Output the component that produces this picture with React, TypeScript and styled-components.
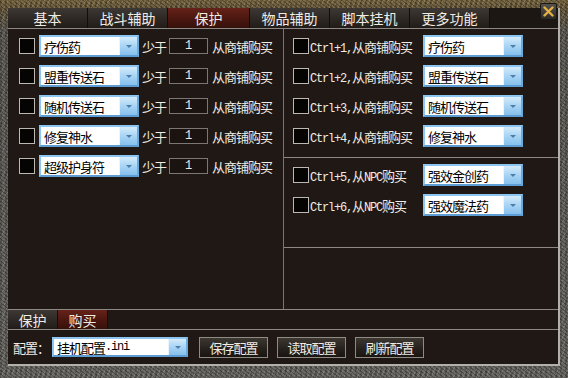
import { createGlobalStyle, styled } from "styled-components";

const cjk = `"Noto Sans CJK SC", "Noto Sans", sans-serif`;
const mono = `"Liberation Mono", "Noto Sans CJK SC", monospace`;

const GlobalStyle = createGlobalStyle`
  body {
    margin: 0;
    background: #111;
  }
  * {
    box-sizing: border-box;
  }
`;

const Frame = styled.div`
  position: relative;
  width: 568px;
  height: 378px;
  padding: 8px 8px 12px 8px;
  font-family: ${cjk};
  color: #f0ece4;
  background:
    repeating-linear-gradient(37deg, rgba(0, 0, 0, 0.28) 0 1px, transparent 1px 3px),
    repeating-linear-gradient(-61deg, rgba(255, 255, 255, 0.13) 0 1px, transparent 1px 4px),
    repeating-linear-gradient(90deg, rgba(0, 0, 0, 0.18) 0 2px, transparent 2px 5px),
    linear-gradient(180deg, #7d6b43 0, #6b5c3c 8px, #5f5c56 30px, #6a6863 100%);
`;

const Window = styled.div`
  display: flex;
  flex-direction: column;
  height: 100%;
  background: #1f1814;
  border-right: 2px solid #b3afa9;
  border-bottom: 2px solid #b3afa9;
`;

const TabBar = styled.div`
  display: flex;
  height: 20px;
  background: #1d1713;
`;

const Tab = styled.div<{ $active?: boolean; $w: number }>`
  display: flex;
  align-items: center;
  justify-content: center;
  width: ${(p) => p.$w}px;
  height: 100%;
  font-size: 14px;
  line-height: 1;
  border-right: 1px solid #120d0a;
  background: ${(p) =>
    p.$active
      ? "linear-gradient(180deg, #66221a 0%, #4a170f 55%, #35110b 100%)"
      : "linear-gradient(180deg, #3d3834 0%, #2d2824 55%, #221c18 100%)"};
`;

const CloseButton = styled.div`
  position: absolute;
  left: 540px;
  top: 3px;
  width: 17px;
  height: 17px;
  display: flex;
  align-items: center;
  justify-content: center;
  border-radius: 2px;
  background: linear-gradient(180deg, #55524d, #2c2a27);
  border: 1px solid #1a1816;
`;

const Main = styled.div`
  display: grid;
  grid-template-columns: 276px 1fr;
  height: 282px;
  border-top: 1px solid #8d8883;
  border-bottom: 1px solid #8d8883;
`;

const LeftPanel = styled.div`
  display: flex;
  flex-direction: column;
  gap: 8px;
  padding: 6px 0 0 11px;
  border-right: 1px solid #7a7570;
`;

const RightPanel = styled.div`
  display: flex;
  flex-direction: column;
`;

const Section = styled.div<{ $h: number }>`
  display: flex;
  flex-direction: column;
  gap: 8px;
  height: ${(p) => p.$h}px;
  padding: 6px 0 0 9px;
  border-bottom: 1px solid #8d8883;
`;

const Row = styled.div`
  display: flex;
  align-items: center;
  height: 22px;
`;

const Check = styled.div<{ $mr?: number }>`
  width: 16px;
  height: 16px;
  flex: none;
  margin-right: ${(p) => p.$mr ?? 0}px;
  background: #060403;
  border: 1px solid #bdb8b1;
`;

const Select = styled.div<{ $w: number; $h: number }>`
  display: flex;
  width: ${(p) => p.$w}px;
  height: ${(p) => p.$h}px;
  flex: none;
  background: #fff;
  border: 2px solid #8cc6f0;
  border-bottom-color: #5d9dd3;
  border-right-color: #6aaadd;
`;

const SelectText = styled.div`
  flex: 1;
  display: flex;
  align-items: center;
  padding-left: 3px;
  color: #000;
  font-size: 13px;
  letter-spacing: -1px;
  white-space: nowrap;
  overflow: hidden;
`;

const Ascii = styled.span`
  font-family: ${mono};
  font-size: 12px;
  letter-spacing: -1.2px;
`;

const Arrow = styled.div`
  width: 18px;
  display: flex;
  align-items: center;
  justify-content: center;
  border-left: 1px solid #eaf5fd;
  background: linear-gradient(180deg, #d4ebfb 0%, #a8d4f4 50%, #86c0ec 100%);
  &::after {
    content: "";
    border-left: 3px solid transparent;
    border-right: 3px solid transparent;
    border-top: 3px solid #4c7ea8;
  }
`;

const Label = styled.span<{ $ml?: number; $w?: number }>`
  margin-left: ${(p) => p.$ml ?? 0}px;
  width: ${(p) => (p.$w ? `${p.$w}px` : "auto")};
  flex: none;
  font-size: 13px;
  letter-spacing: -1px;
  white-space: nowrap;
`;

const Count = styled.div`
  width: 39px;
  height: 16px;
  margin-left: 3px;
  display: flex;
  align-items: center;
  justify-content: center;
  background: #1a1310;
  border: 1px solid #7c7772;
  font-family: ${mono};
  font-size: 12px;
`;

const BottomTabs = styled.div`
  display: flex;
  height: 20px;
  border-bottom: 1px solid #8d8883;
`;

const ConfigRow = styled.div`
  flex: 1;
  display: flex;
  align-items: center;
  padding-left: 5px;
`;

const Button = styled.div<{ $ml: number }>`
  width: 69px;
  height: 21px;
  margin-left: ${(p) => p.$ml}px;
  display: flex;
  align-items: center;
  justify-content: center;
  font-size: 13px;
  letter-spacing: -1px;
  border: 1px solid #8f8a84;
  background: linear-gradient(180deg, #3d3732 0%, #26201c 60%, #1a1511 100%);
`;

const topTabs = ["基本", "战斗辅助", "保护", "物品辅助", "脚本挂机", "更多功能"];
const leftItems = ["疗伤药", "盟重传送石", "随机传送石", "修复神水", "超级护身符"];
const shopItems = ["疗伤药", "盟重传送石", "随机传送石", "修复神水"];
const npcItems = ["强效金创药", "强效魔法药"];

function Dropdown({ text, w = 100, h = 22 }: { text: React.ReactNode; w?: number; h?: number }) {
  return (
    <Select $w={w} $h={h}>
      <SelectText>{text}</SelectText>
      <Arrow />
    </Select>
  );
}

export default function App() {
  return (
    <>
      <GlobalStyle />
      <Frame>
        <Window>
          <TabBar>
            {topTabs.map((t, i) => (
              <Tab key={t} $w={i === 2 ? 82 : 80} $active={i === 2}>
                {t}
              </Tab>
            ))}
          </TabBar>
          <Main>
            <LeftPanel>
              {leftItems.map((item) => (
                <Row key={item}>
                  <Check $mr={4} />
                  <Dropdown text={item} />
                  <Label $ml={3}>少于</Label>
                  <Count>1</Count>
                  <Label $ml={4}>从商铺购买</Label>
                </Row>
              ))}
            </LeftPanel>
            <RightPanel>
              <Section $h={129}>
                {shopItems.map((item, i) => (
                  <Row key={item}>
                    <Check />
                    <Label $ml={1} $w={113}>
                      <Ascii>Ctrl+{i + 1},</Ascii>从商铺购买
                    </Label>
                    <Dropdown text={item} />
                  </Row>
                ))}
              </Section>
              <Section $h={90}>
                {npcItems.map((item, i) => (
                  <Row key={item}>
                    <Check />
                    <Label $ml={1} $w={113}>
                      <Ascii>Ctrl+{i + 5},</Ascii>从<Ascii>NPC</Ascii>购买
                    </Label>
                    <Dropdown text={item} />
                  </Row>
                ))}
              </Section>
            </RightPanel>
          </Main>
          <BottomTabs>
            <Tab $w={50}>保护</Tab>
            <Tab $w={50} $active>
              购买
            </Tab>
          </BottomTabs>
          <ConfigRow>
            <Label $w={39}>配置：</Label>
            <Dropdown
              w={136}
              h={20}
              text={
                <>
                  挂机配置<Ascii>.ini</Ascii>
                </>
              }
            />
            <Button $ml={11}>保存配置</Button>
            <Button $ml={9}>读取配置</Button>
            <Button $ml={9}>刷新配置</Button>
          </ConfigRow>
        </Window>
        <CloseButton>
          <svg width="11" height="11" viewBox="0 0 11 11">
            <path d="M1.5 1.5 L9.5 9.5 M9.5 1.5 L1.5 9.5" stroke="#e2b044" strokeWidth="2.4" strokeLinecap="round" />
          </svg>
        </CloseButton>
      </Frame>
    </>
  );
}
